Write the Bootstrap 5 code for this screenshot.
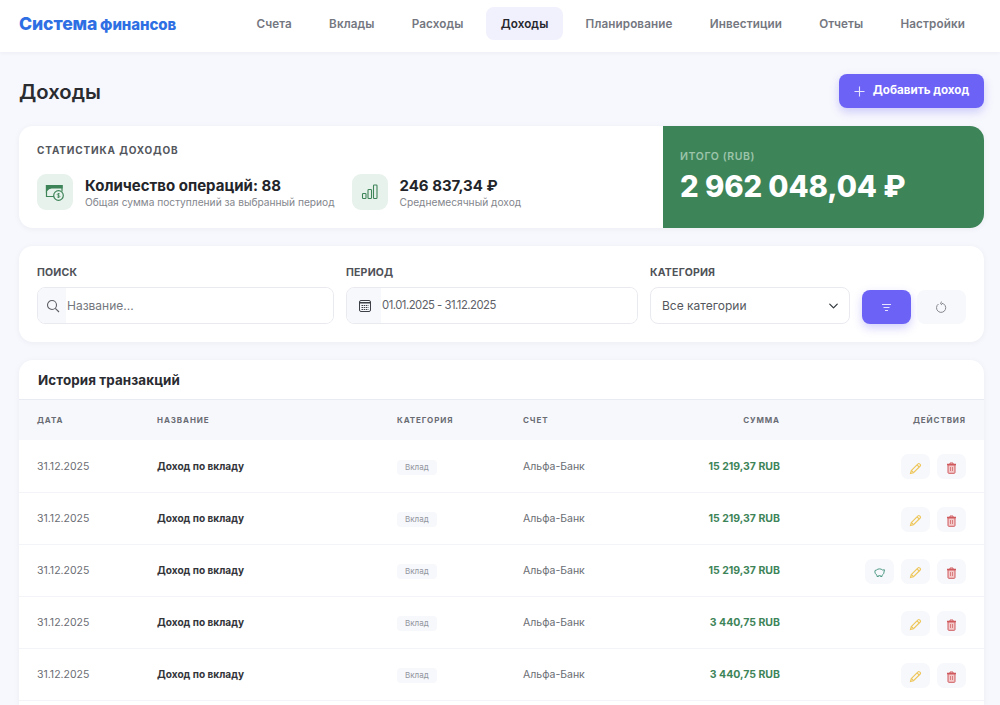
<!DOCTYPE html>
<html lang="ru">
<head>
  <meta charset="UTF-8">
  <title>Доходы</title>
  <link href="https://cdn.jsdelivr.net/npm/bootstrap@5.3.0/dist/css/bootstrap.min.css" rel="stylesheet">
  <style>
    html, body { height: 705px; overflow: hidden; }
    body { background: #f7f8fd; font-family: Inter, "Noto Sans", sans-serif; color: #25272c; }
    .top-bar { height: 52px; background: #fff; padding: 0 20.5px 5px 19px; box-shadow: 0 1px 4px rgba(30,40,80,.05); }
    .brand-name { color: #2f6fe4; font-weight: 800; font-size: 17.6px; letter-spacing: -.1px; line-height: 1; text-decoration: none; word-spacing: -1px; }
    .brand-name span { font-size: 15px; }
    .top-links { gap: 8px; }
    .top-links .nav-link { color: #74777f; font-size: 11.7px; font-weight: 600; padding: 9.5px 14.6px 8.5px; line-height: 15px; border-radius: 8px; height: 33px; letter-spacing: .1px; white-space: nowrap; }
    .top-links .nav-link.active { color: #25272c; background: #f1f0fd; }
    .page-body { padding: 22px 16px 0 19px; }
    .page-head { height: 34px; margin-bottom: 18px; }
    .page-title { font-size: 20.3px; font-weight: 600; margin: 3px 0 0; color: #2a2c30; }
    .btn-add { background: #6c63f6; color: #fff; border: 0; border-radius: 8px; height: 34px; width: 145px; font-size: 11.6px; font-weight: 700; padding: 0; box-shadow: 0 4px 10px rgba(108,99,246,.3); }
    .panel-box { background: #fff; border-radius: 14px; box-shadow: 0 1px 6px rgba(30,40,80,.05); margin-bottom: 18px; overflow: hidden; }
    .stats-left { width: 643.5px; padding: 17px 18px 18px; }
    .stats-title { font-size: 10px; font-weight: 700; letter-spacing: .85px; color: #53565c; line-height: 14px; margin-bottom: 17px; }
    .stat-ico { width: 36px; height: 36px; border-radius: 9px; background: #e8f2ec; flex: none; }
    .stat-pair { gap: 12px; }
    .stat-first { width: 314.5px; }
    .stat-main { font-size: 15px; font-weight: 700; line-height: 18px; color: #23252a; white-space: nowrap; margin-top: 1px; }
    .stat-sub { font-size: 10.2px; color: #83868d; line-height: 14px; white-space: nowrap; }
    .stats-total { width: 321.5px; background: #3e8459; color: #fff; padding: 23px 17.5px; }
    .total-label { font-size: 10.5px; font-weight: 600; letter-spacing: .6px; color: #9cc4aa; line-height: 16px; }
    .total-value { font-size: 29.3px; font-weight: 800; line-height: 34px; margin-top: 5px; letter-spacing: -.1px; }
    .filter-box { padding: 19px 18px 18px; height: 96px; }
    .filter-label { font-size: 10.5px; font-weight: 700; color: #4f5257; line-height: 14px; margin-bottom: 7px; letter-spacing: .2px; }
    .f-search { width: 297px; } .f-period { width: 292px; } .f-cat { width: 200px; }
    .field-wrap { height: 37px; border: 1px solid #e9eaf0; border-radius: 8px; overflow: hidden; background: #fff; flex-wrap: nowrap; }
    .field-wrap .input-group-text { background: #f7f8fc; border: 0; border-radius: 0; padding: 0; width: 29px; justify-content: center; }
    .f-period .input-group-text { width: 35px; }
    .field-wrap .form-control { border: 0; font-size: 12px; color: #5e6167; padding: 0 0 0 1px; box-shadow: none; background: #fff; }
    .field-wrap .form-control::placeholder { color: #74777d; opacity: 1; }
    .f-period .form-control { font-size: 11.3px; letter-spacing: -.5px; }
    .cat-select { height: 37px; border: 1px solid #e9eaf0; border-radius: 8px; font-size: 12px; color: #54575d; padding: 0 11px; background-position: right 9px center; background-size: 13px 10px; }
    .btn-apply, .btn-clear { width: 49px; height: 34px; border: 0; border-radius: 8px; padding: 0; flex: none; }
    .btn-apply { background: #6c63f6; box-shadow: 0 4px 10px rgba(108,99,246,.3); }
    .btn-clear { background: #f7f8fc; margin-left: -2px; }
    .history-box { padding-bottom: 4px; margin-bottom: 0; border-radius: 14px 14px 0 0; }
    .history-head { height: 40px; padding: 0 19px; font-size: 13.4px; font-weight: 700; color: #2a2c31; line-height: 40px; border-bottom: 1px solid #e9ebf2; letter-spacing: .1px; }
    .tx-table { table-layout: fixed; width: 100%; margin: 0; }
    .tx-table th { background: #f7f8fc; height: 40px; font-size: 8px; font-weight: 700; letter-spacing: .9px; color: #696c73; padding: 0 18px; border: 0; vertical-align: middle; }
    .tx-table td { height: 52px; padding: 2px 18px 0; font-size: 10.5px; color: #6a6d73; border-bottom: 1px solid #f3f4f8; vertical-align: middle; white-space: nowrap; }
    .tx-table td.tx-name { font-weight: 700; color: #33353a; font-size: 10.1px; }
    .tx-table td.tx-sum { font-weight: 700; color: #3e8459; font-size: 10.5px; }
    .cat-tag { display: inline-block; background: #f7f8fc; color: #92959c; font-size: 8px; line-height: 15px; padding: 0 8px; border-radius: 4px; height: 15px; }
    .act-btn { width: 29px; height: 25px; border: 0; padding: 0; background: #f7f8fc; border-radius: 7px; flex: none; }
    .act-row { gap: 7px; }
  </style>
</head>
<body>
  <nav class="top-bar d-flex align-items-center justify-content-between">
    <a class="brand-name" href="#">Система <span>финансов</span></a>
    <div class="nav top-links flex-nowrap">
      <a class="nav-link" href="#">Счета</a>
      <a class="nav-link" href="#">Вклады</a>
      <a class="nav-link" href="#">Расходы</a>
      <a class="nav-link active" href="#">Доходы</a>
      <a class="nav-link" href="#">Планирование</a>
      <a class="nav-link" href="#">Инвестиции</a>
      <a class="nav-link" href="#">Отчеты</a>
      <a class="nav-link" href="#">Настройки</a>
    </div>
  </nav>

  <main class="page-body">
    <div class="page-head d-flex align-items-center justify-content-between">
      <h1 class="page-title">Доходы</h1>
      <button class="btn btn-add d-flex align-items-center justify-content-center">
        <svg class="me-2" width="11" height="11" viewBox="0 0 11 11" fill="none" stroke="#e6e4ff" stroke-width="1.1"><path d="M5.500 .5v10M.5 5.500h10"/></svg>
        Добавить доход
      </button>
    </div>

    <section class="panel-box d-flex">
      <div class="stats-left">
        <div class="stats-title">СТАТИСТИКА ДОХОДОВ</div>
        <div class="d-flex">
          <div class="d-flex align-items-center stat-pair stat-first">
            <div class="stat-ico d-flex align-items-center justify-content-center">
              <svg width="20" height="20" viewBox="0 0 20 20" fill="none" stroke="#3e8459" stroke-width="1.2">
                <path d="M9 14.500H1.500V3.500h15.500v6"/>
                <path d="M1.500 3.500h15.500v2.500H6.500c-2 0-4 1.500-5 3z" fill="#3e8459"/>
                <circle cx="13.500" cy="13.500" r="4.800" fill="#e8f2ec"/>
                <path d="M13.500 11v5M14.900 12c-1-.7-2.700-.5-2.700.5 0 1.300 2.700.7 2.700 2 0 1-1.700 1.100-2.800.4" stroke-width=".8"/>
              </svg>
            </div>
            <div>
              <div class="stat-main">Количество операций: 88</div>
              <div class="stat-sub">Общая сумма поступлений за выбранный период</div>
            </div>
          </div>
          <div class="d-flex align-items-center stat-pair">
            <div class="stat-ico d-flex align-items-center justify-content-center">
              <svg width="18" height="18" viewBox="0 0 18 18" fill="none" stroke="#3e8459" stroke-width="1.1">
                <rect x="1.500" y="10.500" width="3.500" height="5" rx=".8"/><rect x="7" y="6.500" width="3.500" height="9" rx=".8"/><rect x="12.500" y="2" width="3.500" height="13.500" rx=".8"/>
              </svg>
            </div>
            <div>
              <div class="stat-main">246 837,34 ₽</div>
              <div class="stat-sub">Среднемесячный доход</div>
            </div>
          </div>
        </div>
      </div>
      <div class="stats-total">
        <div class="total-label">ИТОГО (RUB)</div>
        <div class="total-value">2 962 048,04 ₽</div>
      </div>
    </section>

    <section class="panel-box filter-box d-flex gap-2 align-items-end">
      <div class="f-search">
        <div class="filter-label">ПОИСК</div>
        <div class="input-group field-wrap">
          <span class="input-group-text">
            <svg width="14" height="14" viewBox="0 0 14 14" fill="none" stroke="#5b5e64" stroke-width="1.1"><circle cx="6" cy="6" r="4.500"/><path d="M9.300 9.300 13 13"/></svg>
          </span>
          <input type="text" class="form-control" placeholder="Название...">
        </div>
      </div>
      <div class="f-period ms-1">
        <div class="filter-label">ПЕРИОД</div>
        <div class="input-group field-wrap">
          <span class="input-group-text">
            <svg width="14" height="14" viewBox="0 0 14 14" fill="none" stroke="#3d4046" stroke-width="1"><rect x="1.500" y="1.500" width="11" height="11" rx="1.500"/><path d="M1.500 3.800h11" stroke-width="1.600"/><path d="M3.500 6.500h7M3.500 8.500h7M3.500 10.500h7" stroke-dasharray="1.500 .7"/></svg>
          </span>
          <input type="text" class="form-control" value="01.01.2025 - 31.12.2025">
        </div>
      </div>
      <div class="f-cat ms-1">
        <div class="filter-label">КАТЕГОРИЯ</div>
        <select class="form-select cat-select"><option>Все категории</option></select>
      </div>
      <button class="btn btn-apply ms-1 d-flex align-items-center justify-content-center">
        <svg width="11" height="9" viewBox="0 0 11 9" fill="none" stroke="#e6e4ff" stroke-width="1"><path d="M1 1.500h9M2.500 4.500h6M4 7.500h3"/></svg>
      </button>
      <button class="btn btn-clear d-flex align-items-center justify-content-center">
        <svg width="13" height="13" viewBox="0 0 13 13" fill="none" stroke="#83868d" stroke-width="1"><path d="M3.500 3a4.600 4.600 0 1 0 3-.8"/><path d="M7 .6 5.200 2.300 7 4" stroke-width=".9"/></svg>
      </button>
    </section>

    <section class="panel-box history-box">
      <div class="history-head">История транзакций</div>
      <table class="table tx-table">
        <colgroup>
          <col style="width:120px"><col style="width:240px"><col style="width:126px"><col style="width:135px"><col style="width:158px"><col>
        </colgroup>
        <thead>
          <tr><th>ДАТА</th><th>НАЗВАНИЕ</th><th>КАТЕГОРИЯ</th><th>СЧЕТ</th><th class="text-end">СУММА</th><th class="text-end">ДЕЙСТВИЯ</th></tr>
        </thead>
        <tbody id="txRows"></tbody>
      </table>
    </section>
  </main>

  <script src="https://cdn.jsdelivr.net/npm/bootstrap@5.3.0/dist/js/bootstrap.bundle.min.js"></script>
  <script>
    const pencil = '<svg width="13" height="13" viewBox="0 0 13 13" fill="none" stroke="#eec65a" stroke-width="1.1"><path d="M1.500 11.500l.8-3L9 1.800a1.100 1.100 0 0 1 1.600 0l.6.600a1.100 1.100 0 0 1 0 1.600L4.500 10.700z"/><path d="M2.300 8.500l2.200 2.200M8 2.800l2.200 2.200"/></svg>';
    const trash = '<svg width="11" height="12" viewBox="0 0 11 12" fill="none" stroke="#cf5b5f" stroke-width="1"><path d="M1 2.500h9" stroke-width="1.500"/><path d="M4 2V1h3v1"/><path d="M2 3v7.500a.8.8 0 0 0 .8.8h5.400a.8.8 0 0 0 .8-.8V3z" fill="#f3c9ca"/><path d="M4.500 5v4M6.500 5v4" stroke-width=".7"/></svg>';
    const piggy = '<svg width="13" height="11" viewBox="0 0 13 11" fill="none" stroke="#4f9a84" stroke-width="1"><path d="M2 3.500 3.500 3C5 1.500 8 1.500 9.500 3l2-.2L11 5c0 2-1.500 3-2 3.200v1.300H7.500v-.8h-2v.8H4V8.200C2.500 7.500 1.500 5.500 2 3.500z"/></svg>';
    const rows = [
      ['15 219,37 RUB', false], ['15 219,37 RUB', false], ['15 219,37 RUB', true],
      ['3 440,75 RUB', false], ['3 440,75 RUB', false]
    ];
    document.getElementById('txRows').innerHTML = rows.map(r => `
      <tr>
        <td>31.12.2025</td>
        <td class="tx-name">Доход по вкладу</td>
        <td><span class="cat-tag">Вклад</span></td>
        <td>Альфа-Банк</td>
        <td class="tx-sum text-end">${r[0]}</td>
        <td><div class="d-flex justify-content-end act-row">
          ${r[1] ? `<button class="btn act-btn">${piggy}</button>` : ''}
          <button class="btn act-btn">${pencil}</button>
          <button class="btn act-btn">${trash}</button>
        </div></td>
      </tr>`).join('');
  </script>
</body>
</html>
